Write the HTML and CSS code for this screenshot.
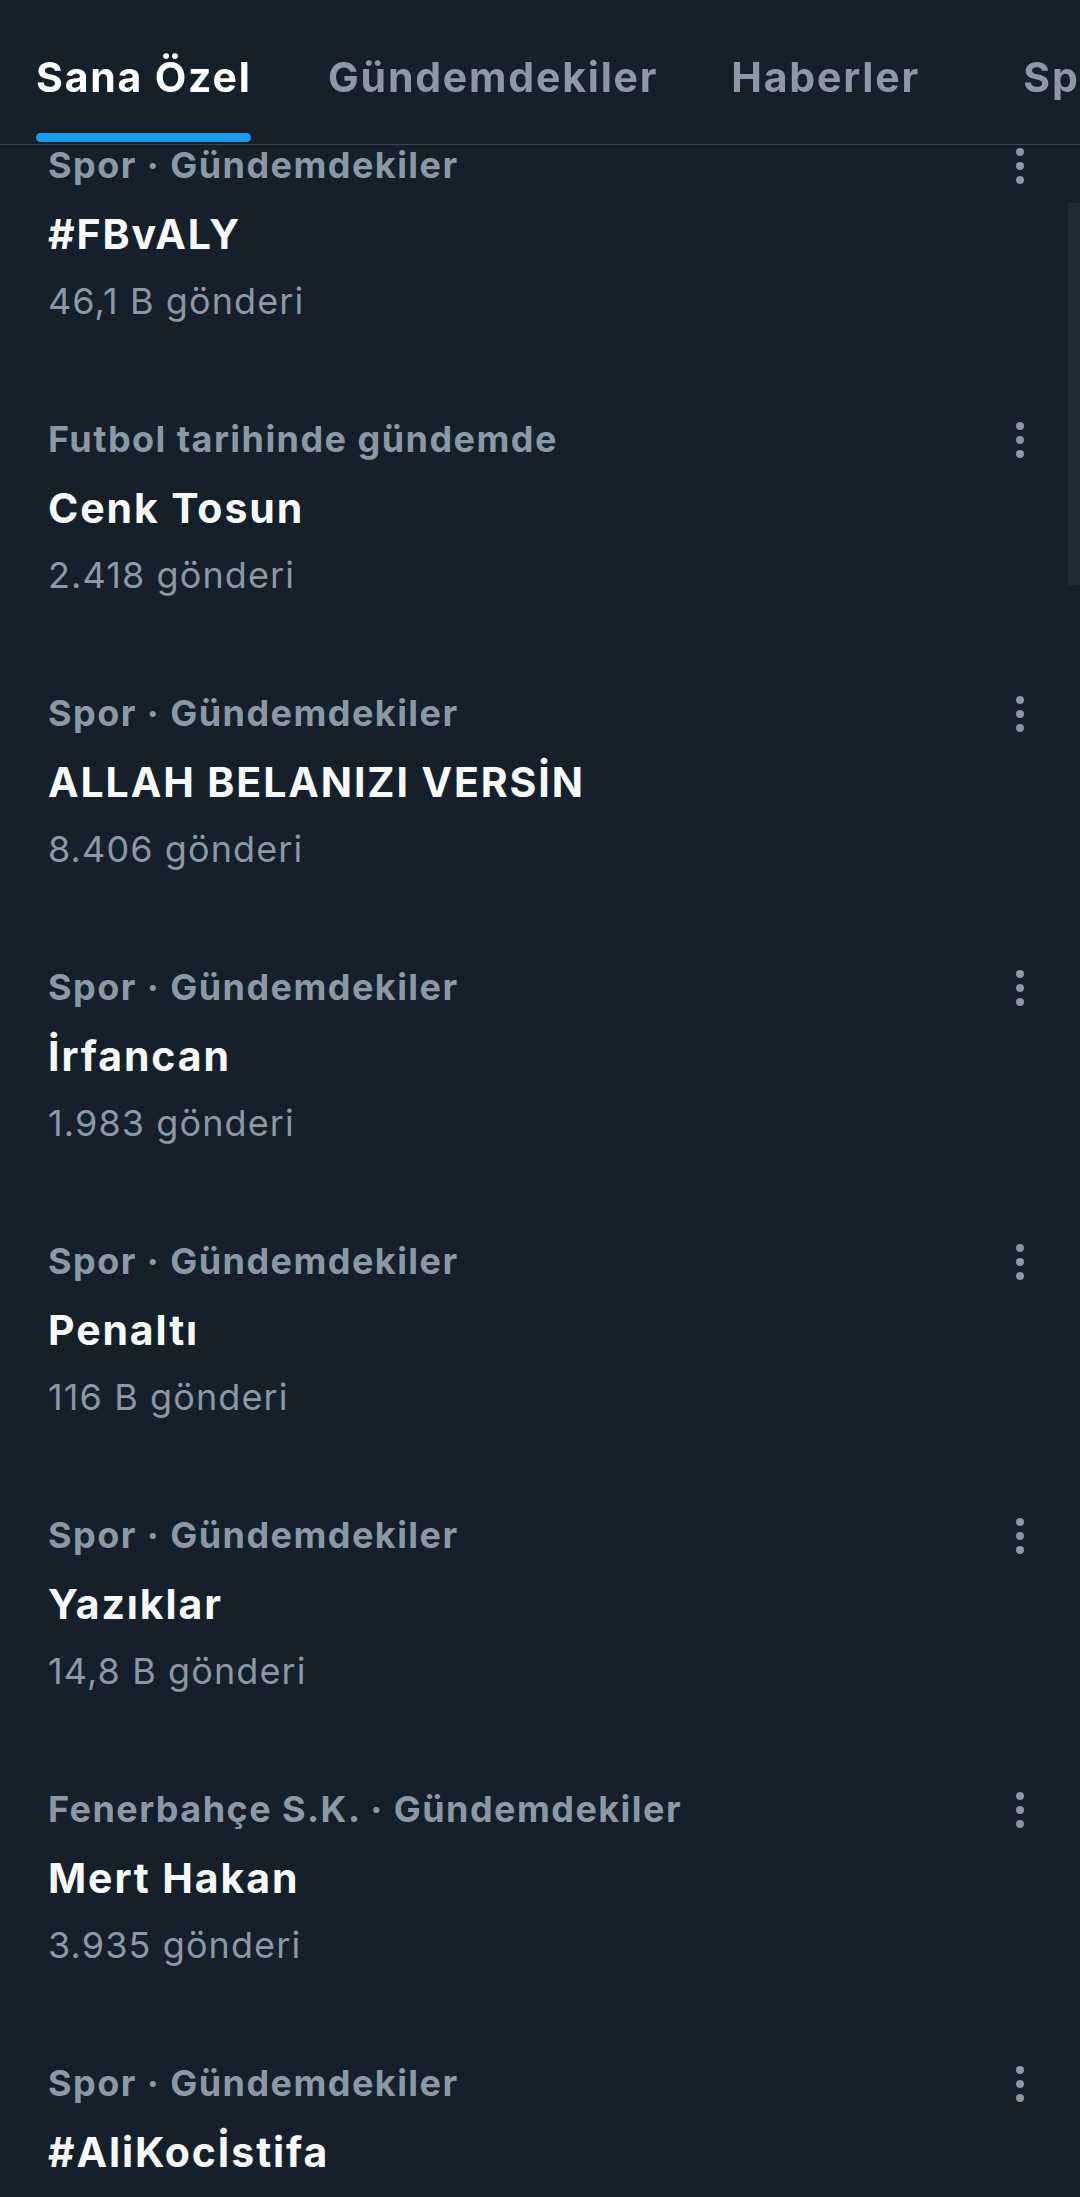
FILE: index.html
```html
<!DOCTYPE html>
<html lang="tr">
<head>
    <meta charset="UTF-8">
    <meta name="viewport" content="width=device-width, initial-scale=1.0">
    <title>Keşfet - Sana Özel</title>
    <link rel="stylesheet" href="styles.css">
</head>
<body>
    <nav class="tabs">
        <div class="tab active"><span>Sana Özel</span></div>
        <div class="tab"><span>Gündemdekiler</span></div>
        <div class="tab"><span>Haberler</span></div>
        <div class="tab"><span>Spor</span></div>
    </nav>
    <div class="scrollbar"></div>
    <main class="trends">
        <div class="trend">
            <div class="trend-body">
                <p class="trend-cat">Spor · Gündemdekiler</p>
                <p class="trend-title">#FBvALY</p>
                <p class="trend-count">46,1 B gönderi</p>
            </div>
            <svg class="trend-more" viewBox="0 0 40 40"><circle cx="20" cy="6" r="4"/><circle cx="20" cy="20" r="4"/><circle cx="20" cy="34" r="4"/></svg>
        </div>
        <div class="trend">
            <div class="trend-body">
                <p class="trend-cat">Futbol tarihinde gündemde</p>
                <p class="trend-title">Cenk Tosun</p>
                <p class="trend-count">2.418 gönderi</p>
            </div>
            <svg class="trend-more" viewBox="0 0 40 40"><circle cx="20" cy="6" r="4"/><circle cx="20" cy="20" r="4"/><circle cx="20" cy="34" r="4"/></svg>
        </div>
        <div class="trend">
            <div class="trend-body">
                <p class="trend-cat">Spor · Gündemdekiler</p>
                <p class="trend-title">ALLAH BELANIZI VERSİN</p>
                <p class="trend-count">8.406 gönderi</p>
            </div>
            <svg class="trend-more" viewBox="0 0 40 40"><circle cx="20" cy="6" r="4"/><circle cx="20" cy="20" r="4"/><circle cx="20" cy="34" r="4"/></svg>
        </div>
        <div class="trend">
            <div class="trend-body">
                <p class="trend-cat">Spor · Gündemdekiler</p>
                <p class="trend-title">İrfancan</p>
                <p class="trend-count">1.983 gönderi</p>
            </div>
            <svg class="trend-more" viewBox="0 0 40 40"><circle cx="20" cy="6" r="4"/><circle cx="20" cy="20" r="4"/><circle cx="20" cy="34" r="4"/></svg>
        </div>
        <div class="trend">
            <div class="trend-body">
                <p class="trend-cat">Spor · Gündemdekiler</p>
                <p class="trend-title">Penaltı</p>
                <p class="trend-count">116 B gönderi</p>
            </div>
            <svg class="trend-more" viewBox="0 0 40 40"><circle cx="20" cy="6" r="4"/><circle cx="20" cy="20" r="4"/><circle cx="20" cy="34" r="4"/></svg>
        </div>
        <div class="trend">
            <div class="trend-body">
                <p class="trend-cat">Spor · Gündemdekiler</p>
                <p class="trend-title">Yazıklar</p>
                <p class="trend-count">14,8 B gönderi</p>
            </div>
            <svg class="trend-more" viewBox="0 0 40 40"><circle cx="20" cy="6" r="4"/><circle cx="20" cy="20" r="4"/><circle cx="20" cy="34" r="4"/></svg>
        </div>
        <div class="trend">
            <div class="trend-body">
                <p class="trend-cat">Fenerbahçe S.K. · Gündemdekiler</p>
                <p class="trend-title">Mert Hakan</p>
                <p class="trend-count">3.935 gönderi</p>
            </div>
            <svg class="trend-more" viewBox="0 0 40 40"><circle cx="20" cy="6" r="4"/><circle cx="20" cy="20" r="4"/><circle cx="20" cy="34" r="4"/></svg>
        </div>
        <div class="trend">
            <div class="trend-body">
                <p class="trend-cat">Spor · Gündemdekiler</p>
                <p class="trend-title">#AliKocİstifa</p>
                <p class="trend-count">5.120 gönderi</p>
            </div>
            <svg class="trend-more" viewBox="0 0 40 40"><circle cx="20" cy="6" r="4"/><circle cx="20" cy="20" r="4"/><circle cx="20" cy="34" r="4"/></svg>
        </div>
    </main>
</body>
</html>
```

FILE: styles.css
```css
* {
    margin: 0;
    padding: 0;
    box-sizing: border-box;
}
html, body {
    width: 1080px;
    height: 2197px;
    overflow: hidden;
}
body {
    background: #15202b;
    color: #f7f9f9;
    font-family: Inter, "Noto Sans", sans-serif;
}
.tabs {
    position: sticky;
    top: 0;
    z-index: 2;
    display: flex;
    height: 145px;
    background: #15202b;
    border-bottom: 1px solid #38444d;
    white-space: nowrap;
}
.tab {
    flex-shrink: 0;
    min-width: 292px;
    padding: 0 37px 0 36px;
    font-size: 41px;
    font-weight: 700;
    letter-spacing: 1.8px;
    color: #8b98a5;
}
.tab span {
    position: relative;
    display: inline-block;
    padding-top: 10px;
    line-height: 134px;
}
.tab.active {
    color: #ffffff;
}
.tab.active span::after {
    content: "";
    position: absolute;
    left: 0;
    right: 1px;
    bottom: 2px;
    height: 9px;
    border-radius: 5px;
    background: #1d9bf0;
}
.scrollbar {
    position: absolute;
    z-index: 3;
    right: 0;
    top: 203px;
    width: 12px;
    height: 382px;
    background: #222b35;
}
.trends {
    margin-top: -50px;
}
.trend {
    display: flex;
    justify-content: space-between;
    align-items: flex-start;
    height: 274px;
    padding: 35px 40px 35px 48px;
}
.trend-cat {
    font-size: 36px;
    font-weight: 700;
    letter-spacing: 1.45px;
    line-height: 70px;
    color: #8b98a5;
}
.trend-title {
    font-size: 41px;
    font-weight: 700;
    letter-spacing: 1.9px;
    line-height: 68px;
    color: #f7f9f9;
}
.trend-count {
    font-size: 36px;
    font-weight: 400;
    letter-spacing: 1.1px;
    line-height: 66px;
    color: #8b98a5;
}
.trend-more {
    width: 40px;
    height: 40px;
    margin-top: 16px;
    fill: #8b98a5;
}
```
